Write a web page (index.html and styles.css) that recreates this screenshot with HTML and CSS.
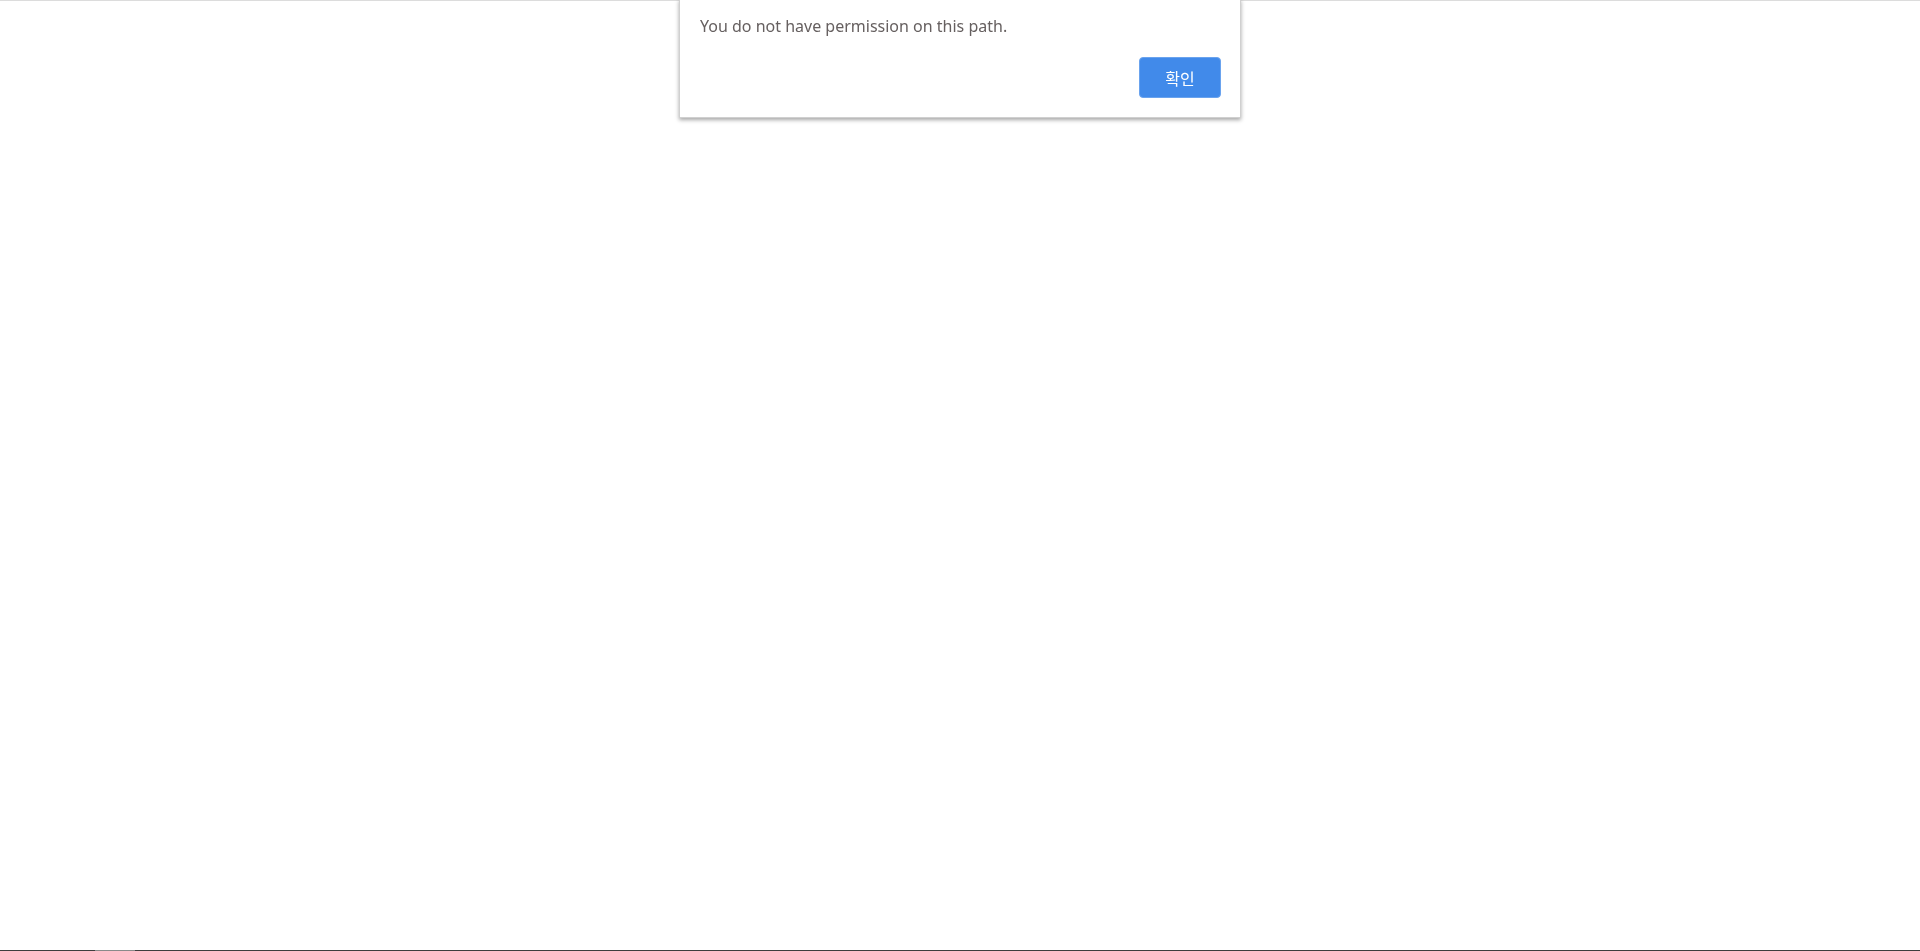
FILE: index.html
```html
<!DOCTYPE html>
<html lang="ko">
<head>
<meta charset="utf-8">
<title>Alert</title>
<link rel="stylesheet" href="styles.css">
</head>
<body>
<div class="page">
  <div class="topline"></div>
  <div class="content"></div>
  <div class="bottombar"><span class="bar-pad"></span><span class="bar-thumb"></span></div>
</div>
<div class="dialog">
  <p class="message">You do not have permission on this path.</p>
  <div class="actions"><button class="btn-ok">확인</button></div>
</div>
</body>
</html>
```
FILE: styles.css
```css
html, body {
  margin: 0;
  padding: 0;
  height: 100%;
  background: #ffffff;
  font-family: "Noto Sans", "Noto Sans CJK KR", sans-serif;
}
.page {
  display: flex;
  flex-direction: column;
  height: 100vh;
}
.topline {
  height: 1px;
  background: #dcdcdc;
}
.content {
  flex: 1;
}
.bottombar {
  height: 1px;
  background: #3e3e3e;
  display: flex;
}
.bar-pad { width: 95px; }
.bar-thumb { width: 40px; background: #8a8a8a; }
.dialog {
  position: fixed;
  top: -1px;
  left: 679px;
  width: 562px;
  box-sizing: border-box;
  background: #fff;
  border: 1px solid #d0d0d0;
  border-top: none;
  box-shadow: 0 2px 4px rgba(0,0,0,0.35);
  padding: 15px 19px 19px 20px;
}
.message {
  margin: 0;
  font-size: 16px;
  line-height: 24px;
  color: #666060;
}
.actions {
  display: flex;
  justify-content: flex-end;
  margin-top: 19px;
}
.btn-ok {
  width: 82px;
  height: 41px;
  border: 1px solid #6aa3ee;
  border-radius: 4px;
  background: #418aea;
  color: #fff;
  font-family: "Noto Sans CJK KR", sans-serif;
  font-size: 16px;
  padding: 0;
}
```
